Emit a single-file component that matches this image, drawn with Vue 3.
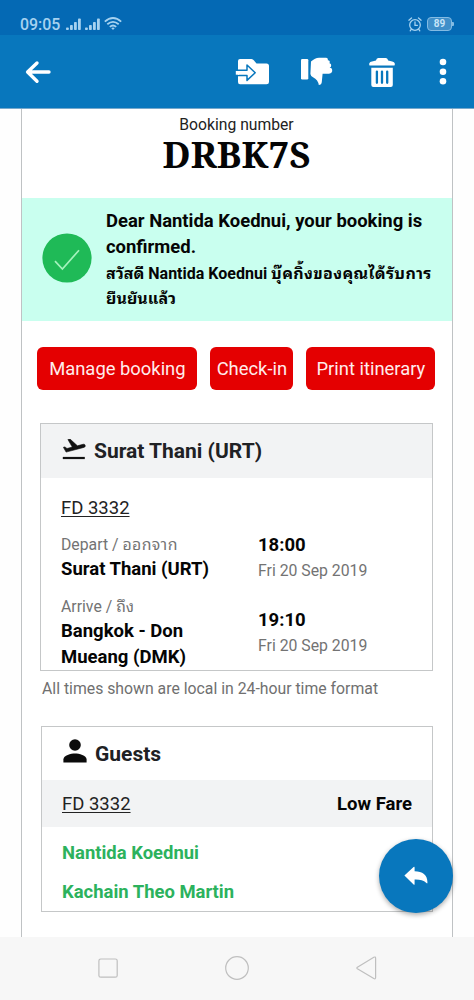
<script setup>
const actions = [
  { label: 'Manage booking', cls: 'manage' },
  { label: 'Check-in', cls: 'checkin' },
  { label: 'Print itinerary', cls: 'print' },
]
const guests = ['Nantida Koednui', 'Kachain Theo Martin']
const bars = [
  { x: 0, h: 2.5 },
  { x: 4, h: 5 },
  { x: 8, h: 8 },
  { x: 12, h: 11.5 },
]
</script>

<template>
  <div class="screen">
    <header class="status">
      <span class="clock">09:05</span>
      <svg v-for="n in 2" :key="n" class="signal" width="16" height="12" viewBox="0 0 16 12">
        <rect v-for="b in bars" :key="b.x" :x="b.x" :y="12 - b.h" width="2.8" :height="b.h" rx=".8" fill="#a6d2f0" />
      </svg>
      <svg class="wifi" width="18" height="13" viewBox="0 0 18 13" fill="none" stroke="#a6d2f0" stroke-width="1.8">
        <path d="M.8 4.6Q9-2.6 17.2 4.6M3.3 7.3Q9 2.4 14.7 7.3M5.8 9.9Q9 7.2 12.2 9.9" />
        <path d="M7.2 11L9 13L10.8 11Q9 9.8 7.2 11Z" fill="#a6d2f0" stroke="none" />
      </svg>
      <span class="grow"></span>
      <svg class="alarm" width="14" height="15" viewBox="0 0 14 15" fill="none" stroke="#a6d2f0" stroke-width="1.3" stroke-linecap="round">
        <circle cx="7" cy="8" r="5.3" />
        <path d="M7 5V8.3H9.4M.9 3.2L3.5 1M13.1 3.2L10.5 1M3.4 12.2L2.2 13.8M10.6 12.2L11.8 13.8" />
      </svg>
      <span class="battery">89</span><span class="nub"></span>
    </header>

    <nav class="toolbar">
      <svg class="back" width="26" height="24" viewBox="0 0 26 24" fill="none" stroke="#fff" stroke-width="3.4" stroke-linecap="round" stroke-linejoin="round">
        <path d="M12 3L2.6 12L12 21.2M3 12H24" />
      </svg>
      <span class="grow"></span>
      <svg class="move" width="36" height="28" viewBox="0 0 36 28">
        <path d="M3 3Q3 1 5 1H16.5Q18 1 19 2.5L21.5 5.5H31.5Q34 5.5 34 8V24Q34 26.3 31.5 26.3H5Q3 26.3 3 24Z" fill="#fff" />
        <path d="M1.5 12.2H12V7L20.2 14.7L12 22.4V17.5H1.5Z" fill="#fff" stroke="#0877bd" stroke-width="1.5" stroke-linejoin="round" />
        <path d="M0 11.2H2.8V18.4H0Z" fill="#0877bd" />
        <path d="M.8 13H4V16.7H.8Z" fill="#fff" />
      </svg>
      <svg class="dislike" width="34" height="30" viewBox="0 0 34 30" fill="#fff">
        <rect x="1" y="2" width="7.3" height="20.5" rx="1.2" />
        <path d="M11 4.5Q15 .7 19 .7H26Q28.3.8 27.8 3.2Q30.5 3.3 29.5 6.3Q32 6.8 30.8 9.9L29.6 10.6Q32.5 11 32.2 14.2Q31.8 16.6 29 16.7H22.6L21.8 25Q21.5 28 18.8 28Q18.2 23 13 20.2Q10.8 19.2 10.4 17Z" />
      </svg>
      <svg class="trash" width="28" height="30" viewBox="0 0 28 30">
        <path d="M1.5 8.5Q1 7.5 1.3 6.2Q2 5 4 4.6L8 3.6Q8.4 1 10.2 1H18Q19.6 1 20.2 3.6L24.2 4.6Q26.5 5.2 26.8 6.5Q27 7.6 26.5 8.5Z" fill="#fff" />
        <path d="M3.3 10.8H24.8V28Q24.8 30 22.8 30H5.3Q3.3 30 3.3 28Z" fill="#fff" />
        <path d="M8.9 14.6V25.8M14 14.6V25.8M19.2 14.6V25.8" stroke="#0877bd" stroke-width="2.3" stroke-linecap="round" />
      </svg>
      <svg class="more" width="8" height="28" viewBox="0 0 8 28" fill="#fff">
        <circle cx="4" cy="4" r="3.3" /><circle cx="4" cy="13.7" r="3.3" /><circle cx="4" cy="23.2" r="3.3" />
      </svg>
    </nav>

    <main class="page">
      <section class="number">
        <p><span class="t-label">Booking number</span></p>
        <h1>DRBK7S</h1>
      </section>

      <section class="notice">
        <svg width="50" height="50" viewBox="0 0 50 50">
          <circle cx="25" cy="25" r="24.6" fill="#1fba57" />
          <path d="M13 28.2L20.4 36L37 17.2" fill="none" stroke="#a4f2bd" stroke-width="1.7" />
        </svg>
        <div class="message">
          <p>Dear Nantida Koednui, your booking is</p>
          <p>confirmed.</p>
          <p class="thai"><span class="th1">สวัสดี</span> Nantida Koednui <span class="th2">บุ๊คกิ้งของคุณได้รับการ</span></p>
          <p class="thai"><span class="th3">ยืนยันแล้ว</span></p>
        </div>
      </section>

      <div class="actions">
        <button v-for="a in actions" :key="a.cls" :class="a.cls">{{ a.label }}</button>
      </div>

      <section class="card flight">
        <h2>
          <svg width="24" height="22" viewBox="0 0 24 22">
            <path d="M.8 19H22.8" stroke="#111" stroke-width="2.2" />
            <path d="M23.2 6.4C23 5.5 22 5 21.1 5.3L15.4 6.8L8 0L5.9.5L10.3 8.1L5 9.5L2.9 7.9L1.4 8.3L4.1 13.1L21.9 8.4C22.9 8.1 23.4 7.3 23.2 6.4Z" fill="#111" stroke="#111" stroke-width=".6" />
          </svg>
          <span>Surat Thani (URT)</span>
        </h2>
        <div class="body">
          <p class="code"><u>FD 3332</u></p>
          <div class="leg">
            <div class="place"><p class="dim">Depart / <span class="th4">ออกจาก</span></p><strong>Surat Thani (URT)</strong></div>
            <div class="when"><strong>18:00</strong><p class="dim">Fri 20 Sep 2019</p></div>
          </div>
          <div class="leg">
            <div class="place"><p class="dim">Arrive / <span class="th5">ถึง</span></p><strong>Bangkok - Don<br>Mueang (DMK)</strong></div>
            <div class="when arrive"><strong>19:10</strong><p class="dim">Fri 20 Sep 2019</p></div>
          </div>
        </div>
      </section>
      <p class="note">All times shown are local in 24-hour time format</p>

      <section class="card guests">
        <h2>
          <svg width="24" height="24" viewBox="0 0 24 24" fill="#0b0b0b">
            <circle cx="12" cy="6" r="5.8" />
            <path d="M.4 23.5V20.5C.4 16.5 8 14.6 12 14.6S23.6 16.5 23.6 20.5V23.5Z" />
          </svg>
          <span>Guests</span>
        </h2>
        <div class="fare"><u>FD 3332</u><strong>Low Fare</strong></div>
        <ul><li v-for="g in guests" :key="g">{{ g }}</li></ul>
      </section>
    </main>

    <button class="reply" aria-label="Reply">
      <svg width="24" height="20" viewBox="0 0 24 20">
        <path d="M.4 9.6L9.6 1Q10.6.2 10.6 1.8V5.2C18.5 5.2 23.4 9 23.4 15.8V17.1Q23.2 17.9 22.4 17C19.5 13.8 15.6 13.3 10.6 13.4V17.8Q10.6 19.5 9.6 18.6Z" fill="#fff" />
      </svg>
    </button>

    <footer class="softkeys">
      <svg width="20" height="20" viewBox="0 0 20 20"><rect x=".9" y="1" width="18.3" height="18.2" rx="1.8" /></svg>
      <svg width="24" height="24" viewBox="0 0 24 24"><circle cx="12" cy="12" r="11.3" /></svg>
      <svg width="21" height="24" viewBox="0 0 21 24"><path d="M1.4 11.2L17.8 1.2Q19.6.5 19.6 2.2V21.6Q19.6 23.4 17.8 22.5L1.4 12.8Q.4 12 1.4 11.2Z" /></svg>
    </footer>
  </div>
</template>

<style>
body { margin: 0; background: #fefefe; }
</style>

<style scoped>
* { box-sizing: border-box; }
p, h1, h2, ul { margin: 0; padding: 0; font-size: inherit; }
.screen { position: relative; width: 474px; height: 1000px; overflow: hidden; display: flex; flex-direction: column; background: #fefefe; color: #050505; font-family: Roboto, "Noto Sans Thai Looped", Loma, Waree, Garuda, "Noto Sans Thai", sans-serif; white-space: nowrap; }
svg { display: block; flex: none; }
.grow { flex: 1; }
.status { height: 35px; flex: none; background: #0469b4; display: flex; align-items: flex-start; padding: 0 21px 0 20px; color: #a6d2f0; }
.clock { width: 46px; font-size: 15.9px; font-weight: 500; line-height: 20px; margin-top: 15px; }
.signal { margin: 18px 3px 0 0; }
.wifi { margin-top: 17px; }
.alarm { margin: 17px 5px 0 0; }
.battery { width: 25px; height: 14px; margin-top: 17px; border: 1px solid #83bbe3; border-radius: 4px; background: #408fc9; font-size: 10px; line-height: 12px; font-weight: 700; text-align: center; color: #c8e5f8; }
.nub { width: 2px; height: 4px; margin-top: 22px; background: #83bbe3; border-radius: 0 1px 1px 0; margin-right: -1px; }
.toolbar { height: 74px; flex: none; background: #0877bd; border-bottom: 1px solid #77a9cc; padding: 1px 27px 0 25px; display: flex; align-items: center; }
.move { margin-right: 29px; }
.dislike { margin-right: 34px; }
.trash { margin-right: 43px; }
.page { height: 828px; flex: none; margin: 0 21px; border: 1px solid #bfc2c4; border-width: 0 1px; background: #fff; }
.number { height: 89px; text-align: center; padding-top: 6px; }
.number p { font-size: 15.7px; line-height: 20px; color: #222; padding-right: 1px; }
h1 { font: 700 36.7px/38px "Noto Serif", "Liberation Serif", serif; padding-right: 1px; }
.notice { height: 123px; background: #c9ffef; display: flex; align-items: center; padding: 0 0 3px 20px; gap: 14px; }
.message { font-size: 18.45px; line-height: 25.7px; font-weight: 700; margin-top: 5px; }
.thai { font-size: 16px; font-weight: 700; }
.th2 { letter-spacing: .35px; }
.th3 { letter-spacing: .05px; }
.th4 { letter-spacing: .4px; }
.actions { display: flex; gap: 13px; padding: 26px 0 0 15.4px; }
button { border: 0; padding: 0; font-family: inherit; }
.actions button { height: 43px; border-radius: 6px; background: #e40001; color: #ffecec; font-size: 18.4px; line-height: 44px; }
.actions .manage { width: 160px; }
.actions .checkin { width: 83px; }
.actions .print { width: 129px; }
.card { border: 1px solid #c5c7c8; }
.flight { width: 393px; height: 248px; margin: 33px 0 0 18px; }
h2 { height: 54px; display: flex; align-items: center; padding-left: 21px; gap: 8px; font-size: 21px; font-weight: 700; color: #202124; }
h2 svg { margin-top: -2px; }
.flight h2 { background: #f2f3f4; }
.body { padding: 18px 0 0 20px; }
.code { font-size: 18.5px; line-height: 24px; }
u { text-underline-offset: 2px; text-decoration-thickness: 1px; color: #222; }
.leg { display: flex; height: 62px; margin-top: 12px; }
.leg + .leg { margin-top: 0; }
.place { width: 197px; }
strong { position: relative; top: 1px; font-weight: 700; font-size: 18.5px; line-height: 25.5px; display: block; }
.dim { position: relative; top: 1px; font-size: 15.8px; line-height: 24px; color: #737373; }
.arrive { padding-top: 13px; }
.note { font-size: 15.8px; line-height: 20px; color: #707070; margin: 8px 0 0 20px; }
.guests { width: 392px; height: 186px; margin: 27px 0 0 19px; }
.guests h2 { height: 53px; }
.guests h2 svg { margin-top: -5px; }
.fare { height: 47px; background: #f2f3f4; display: flex; justify-content: space-between; align-items: center; padding: 0 20px; font-size: 18.5px; }
ul { list-style: none; padding: 7px 0 0 20px; color: #2cb25d; font-weight: 700; font-size: 18.45px; line-height: 39px; }
.reply { position: absolute; left: 379px; top: 839px; width: 74px; height: 74px; border-radius: 50%; background: #0877bd; box-shadow: 0 2px 5px #0005; display: flex; align-items: center; justify-content: center; }
.softkeys { height: 63px; flex: none; background: #f7f7f7; display: flex; align-items: center; padding: 0 0 1px 98px; gap: 107px; }
.softkeys svg { fill: none; stroke: #bfbfbf; stroke-width: 1.2; }
</style>
